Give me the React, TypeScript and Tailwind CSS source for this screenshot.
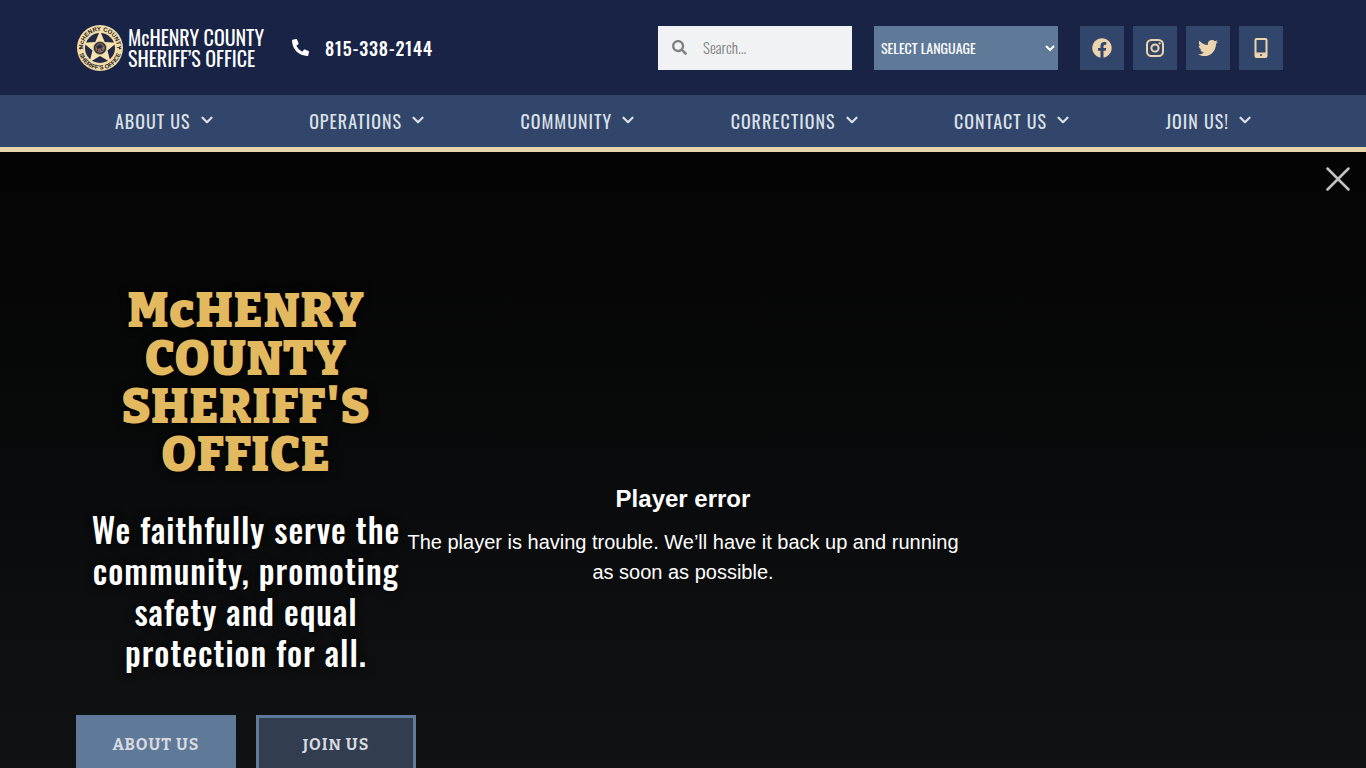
import React from 'react';
import { FaFacebook, FaMobileAlt, FaPhoneAlt, FaSearch, FaTwitter } from 'react-icons/fa';

const navItems = ['About Us', 'Operations', 'Community', 'Corrections', 'Contact Us', 'Join Us!'];

const InstagramIcon: React.FC<{ className?: string }> = ({ className }) => (
  <svg className={className} viewBox="0 0 20 20" fill="none" stroke="currentColor" strokeWidth="2">
    <rect x="2" y="2" width="16" height="16" rx="4.500" />
    <circle cx="10" cy="10" r="3.600" />
    <circle cx="14.600" cy="5.400" r="1.100" fill="currentColor" stroke="none" />
  </svg>
);

const MobileIcon: React.FC<{ className?: string }> = ({ className }) => (
  <svg className={className} viewBox="0 0 20 20" fill="none" stroke="currentColor">
    <rect x="4.500" y="1" width="11" height="18" rx="1" strokeWidth="2" />
    <path d="M4.500 16.500h11" strokeWidth="4" />
    <circle cx="10" cy="17" r="1" fill="#32466b" stroke="none" />
  </svg>
);

const socials = [
  { label: 'Facebook', Icon: FaFacebook },
  { label: 'Instagram', Icon: InstagramIcon },
  { label: 'Twitter', Icon: FaTwitter },
  { label: 'Mobile app', Icon: MobileIcon },
];

const Badge: React.FC = () => (
  <svg className="size-12 shrink-0" viewBox="0 0 96 96" aria-hidden="true">
    <defs>
      <path id="arc-top" d="M14 48a34 34 0 0 1 68 0" />
      <path id="arc-bottom" d="M5 48a43 43 0 0 0 86 0" />
    </defs>
    <circle cx="48" cy="48" r="46" fill="#f3dba6" />
    <circle cx="48" cy="48" r="30" fill="#232a48" />
    <path
      d="M48 14l9.500 22 24 1.500-18.500 15.500 6 23.500L48 64 27 76.500l6-23.500-18.500-15.500 24-1.500z"
      fill="#f8e2ae"
    />
    <circle cx="48" cy="48" r="13" fill="#2c2a35" stroke="#c9b183" strokeWidth="1.500" />
    <circle cx="48" cy="48" r="9.500" fill="#77716f" />
    <path d="M40 45l8-5 7 5-5 3 4 6-7-2-6 4 2-6z" fill="#2d2b3a" />
    <path d="M43 51l5-3 3 5-5 2z" fill="#b45a41" />
    <circle cx="8.500" cy="49" r="1.800" fill="#333" />
    <circle cx="87.500" cy="49" r="1.800" fill="#333" />
    <g fill="#22222c" fontFamily="Liberation Sans" fontWeight="700" fontSize="12" textAnchor="middle">
      <text>
        <textPath href="#arc-top" startOffset="50%">McHENRY COUNTY</textPath>
      </text>
      <text>
        <textPath href="#arc-bottom" startOffset="50%">SHERIFF’S OFFICE</textPath>
      </text>
    </g>
  </svg>
);

const Header: React.FC = () => (
  <header>
    <div className="bg-[#182346]">
      <div className="mx-auto flex h-[95px] max-w-[1214px] items-center pr-[7px]">
        <a href="#" className="flex items-center gap-1 text-xl leading-[21px] text-white">
          <Badge />
          <span>
            <span className="block">McHENRY COUNTY</span>
            <span className="block">SHERIFF’S OFFICE</span>
          </span>
        </a>
        <a href="tel:815-338-2144" className="ml-7 flex items-center gap-4 text-lg font-medium tracking-wider text-white">
          <FaPhoneAlt className="size-[17px]" />
          815-338-2144
        </a>
        <form className="ml-auto flex h-11 w-[194px] items-center bg-[#f1f2f3] pl-3.5" role="search">
          <label htmlFor="search" aria-label="Search">
            <FaSearch className="size-[15px] text-[#818285]" />
          </label>
          <input
            id="search"
            type="search"
            placeholder="Search..."
            className="w-full min-w-0 px-4 text-[15px] font-light text-gray-700 outline-none placeholder:text-[#7f7f82]"
          />
        </form>
        <select
          aria-label="Select language"
          className="ml-[22px] h-11 w-[184px] rounded-none bg-[#5f7999] px-[3px] text-sm text-white"
        >
          <option>SELECT LANGUAGE</option>
          <option>ENGLISH</option>
          <option>SPANISH</option>
        </select>
        <div className="ml-[22px] flex gap-[9px]">
          {socials.map(({ label, Icon }) => (
            <a key={label} href="#" aria-label={label} className="flex size-11 items-center justify-center bg-[#32466b] text-[#ecd5ad]">
              <Icon className="size-5" />
            </a>
          ))}
        </div>
      </div>
    </div>
    <nav className="border-b-[5px] border-[#e7d4ac] bg-[#32466b]">
      <ul className="mx-auto flex h-[52px] max-w-[1136px] items-center justify-between">
        {navItems.map((item) => (
          <li key={item}>
            <a href="#" className="flex items-center gap-2.5 text-lg tracking-[1px] text-[#dbe0e8] uppercase">
              {item}
              <svg className="mb-0.5 h-2 w-3" viewBox="0 0 12 8" fill="none" stroke="currentColor" strokeWidth="2.200" strokeLinecap="round" strokeLinejoin="round">
                <path d="M1.500 1.700L6 6.200l4.500-4.500" />
              </svg>
            </a>
          </li>
        ))}
      </ul>
    </nav>
  </header>
);

const Hero: React.FC = () => (
  <section className="relative flex min-h-screen items-center bg-linear-to-b from-[#040404] to-[#141618]">
    {/* Video player message */}
    <div className="absolute inset-0 flex flex-col items-center justify-center gap-3 pb-0.5 text-center font-['Liberation_Sans',Arial,sans-serif] text-white">
      <h2 className="text-2xl leading-8 font-bold">Player error</h2>
      <p className="max-w-[560px] text-xl leading-[30px]">
        The player is having trouble. We’ll have it back up and running as soon as possible.
      </p>
    </div>
    <button type="button" aria-label="Close" className="absolute top-[15px] right-4 text-[#c3c3c3]">
      <svg className="size-6" viewBox="0 0 24 24" fill="none" stroke="currentColor" strokeWidth="2.500" strokeLinecap="round">
        <path d="M1.500 1.500l21 21M22.500 1.500l-21 21" />
      </svg>
    </button>
    <div className="relative mx-auto w-full max-w-[1214px] pb-2.5">
      <div className="w-[340px] text-center">
        <h1 className="font-['Bitter','DejaVu_Serif_Condensed','DejaVu_Serif',serif] text-5xl leading-[48px] font-black tracking-[1px] text-[#e2b95f] text-shadow-[0_0_10px_#000]">
          <span className="block">McHENRY</span>
          <span className="block">COUNTY</span>
          <span className="block">SHERIFF'S</span>
          <span className="block">OFFICE</span>
        </h1>
        <p className="mt-[30px] text-[33px] leading-[41px] font-medium tracking-[1px] whitespace-nowrap text-white text-shadow-[0_0_10px_#000]">
          <span className="block">We faithfully serve the</span>
          <span className="block">community, promoting</span>
          <span className="block">safety and equal</span>
          <span className="block">protection for all.</span>
        </p>
        <div className="mt-[42px] flex gap-5 font-['Bitter','DejaVu_Serif_Condensed','DejaVu_Serif',serif] text-base font-bold tracking-[1px] text-[#d9dbe0]">
          <a href="#" className="flex h-[60px] w-40 items-center justify-center bg-[#5f7999]">
            ABOUT US
          </a>
          <a href="#" className="flex h-[60px] w-40 items-center justify-center border-3 border-[#5f7999] bg-[#323e50]">
            JOIN US
          </a>
        </div>
      </div>
    </div>
  </section>
);

const App: React.FC = () => (
  <div className="font-['Oswald','Liberation_Sans_Narrow','Arial_Narrow',sans-serif]">
    <Header />
    <main>
      <Hero />
    </main>
  </div>
);

export default App;
